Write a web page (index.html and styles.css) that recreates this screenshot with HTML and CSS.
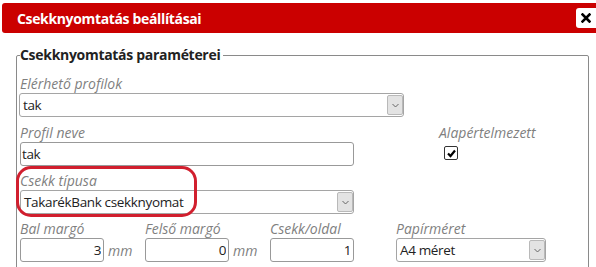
FILE: index.html
```html
<!DOCTYPE html>
<html>
<head>
    <meta http-equiv="Content-Type" content="text/html; charset=utf-8" />
    <title>Csekknyomtatás beállításai</title>
    <link rel="stylesheet" href="styles.css">
</head>
<body>
<div class="dialog">
    <div class="titlebar">
        <span class="title">Csekknyomtatás beállításai</span>
        <span class="close">
            <svg width="10" height="10" viewBox="0 0 10 10"><path d="M1.5 1.5 L8.5 8.5 M8.5 1.5 L1.5 8.5" stroke="#000" stroke-width="2.6" stroke-linecap="square"/></svg>
        </span>
    </div>
    <fieldset class="params">
        <legend>Csekknyomtatás paraméterei</legend>

        <div class="field">
            <label>Elérhető profilok</label>
            <div class="select wide">
                <span class="select-value">tak</span>
                <span class="select-arrow"><svg width="7" height="5" viewBox="0 0 7 5"><path d="M0.5 1 L3.5 4 L6.5 1" fill="none" stroke="#666" stroke-width="1"/></svg></span>
            </div>
        </div>

        <div class="row">
            <div class="field">
                <label>Profil neve</label>
                <input class="text name" type="text" value="tak">
            </div>
            <div class="field default-col">
                <label>Alapértelmezett</label>
                <span class="check">
                    <svg width="11" height="11" viewBox="0 0 11 11"><path d="M2 5.5 L4.5 8 L9 2.5" fill="none" stroke="#000" stroke-width="2.2"/></svg>
                </span>
            </div>
        </div>

        <div class="field">
            <label>Csekk típusa</label>
            <div class="select mid">
                <span class="select-value">TakarékBank csekknyomat</span>
                <span class="select-arrow"><svg width="7" height="5" viewBox="0 0 7 5"><path d="M0.5 1 L3.5 4 L6.5 1" fill="none" stroke="#666" stroke-width="1"/></svg></span>
            </div>
        </div>

        <div class="grid">
            <div class="field">
                <label>Bal margó</label>
                <div class="unit-wrap"><input class="text num" type="text" value="3"><span class="unit">mm</span></div>
            </div>
            <div class="field">
                <label>Felső margó</label>
                <div class="unit-wrap"><input class="text num" type="text" value="0"><span class="unit">mm</span></div>
            </div>
            <div class="field">
                <label>Csekk/oldal</label>
                <input class="text num" type="text" value="1">
            </div>
            <div class="field">
                <label>Papírméret</label>
                <div class="select paper">
                    <span class="select-value">A4 méret</span>
                    <span class="select-arrow"><svg width="7" height="5" viewBox="0 0 7 5"><path d="M0.5 1 L3.5 4 L6.5 1" fill="none" stroke="#666" stroke-width="1"/></svg></span>
                </div>
            </div>
        </div>

        <!-- kiemelés a csekk típusa körül -->
        <div class="highlight"></div>
    </fieldset>
</div>
</body>
</html>
```

FILE: styles.css
```css
* {
    margin: 0;
    padding: 0;
    box-sizing: border-box;
}
html, body {
    background: #fff;
    overflow: hidden;
}
body {
    width: 596px;
    height: 267px;
    font-family: "Open Sans", "Liberation Sans", sans-serif;
    color: #222;
}
/* fejléc */
.titlebar {
    display: flex;
    align-items: center;
    margin: 3px 0 0 2px;
    height: 30px;
    padding-left: 15px;
    background: #cb0000;
    border-radius: 3px 0 0 3px;
}
.title {
    color: #fff;
    font-weight: bold;
    font-size: 14px;
    letter-spacing: -0.35px;
}
.close {
    margin-left: auto;
    width: 20px;
    height: 20px;
    background: #fff;
    border-radius: 3px 0 0 3px;
    display: flex;
    align-items: center;
    justify-content: center;
}
/* keret */
.params {
    position: relative;
    margin: 12px 0 0 16px;
    width: 573px;
    height: 260px;
    border: 1px solid #8a8a8a;
    border-radius: 2px;
    padding: 10px 3px 0 3px;
}
.params legend {
    padding: 0 3px 0 0;
    font-weight: bold;
    font-size: 14px;
    line-height: 20px;
    letter-spacing: -0.3px;
    color: #222;
}
.field label {
    display: block;
    font-style: italic;
    font-size: 14px;
    line-height: 17px;
    height: 17px;
    margin-bottom: 1px;
    color: #7f7f7f;
    white-space: nowrap;
}
.field {
    margin-bottom: 6px;
}
.params > .field:first-of-type {
    margin-bottom: 7px;
}
/* legördülő */
.select {
    display: flex;
    height: 24px;
    border: 1px solid #a5a5a5;
    border-radius: 3px;
    background: #fff;
}
.select.wide { width: 385px; margin-left: -1px; }
.select.mid { width: 334px; }
.select.paper { width: 150px; }
.select-value {
    flex: 1;
    padding-left: 3px;
    font-size: 13.5px;
    letter-spacing: -0.35px;
    line-height: 22px;
    white-space: nowrap;
}
.select-arrow {
    width: 16px;
    margin: 1px 0 1px 0;
    background: #e3e3e3;
    border: 1px solid #b9b9b9;
    border-radius: 2px;
    display: flex;
    align-items: center;
    justify-content: center;
}
/* szövegmezők */
.text {
    display: block;
    height: 24px;
    border: 1px solid #999;
    border-radius: 3px;
    font-family: inherit;
    font-size: 13.5px;
    letter-spacing: -0.35px;
    color: #222;
    padding: 0 2px;
    outline: none;
}
.text.name { width: 334px; padding-left: 1px; }
.text.num { width: 84px; text-align: right; }
.row {
    display: flex;
}
.default-col {
    margin-left: 85px;
}
.check {
    display: flex;
    align-items: center;
    justify-content: center;
    width: 14px;
    height: 14px;
    margin: 5px 0 0 5px;
    border: 1px solid #333;
    border-radius: 2px;
    background: #fff;
}
.grid {
    display: grid;
    grid-template-columns: 125px 125px 126px 150px;
}
.unit-wrap {
    display: flex;
    align-items: center;
}
.unit {
    margin-left: 4px;
    font-style: italic;
    font-size: 14px;
    color: #7f7f7f;
}
/* piros kiemelés */
.highlight {
    position: absolute;
    left: -1px;
    top: 101px;
    width: 181px;
    height: 51px;
    border: 3px solid #d11f2e;
    border-radius: 15px;
    pointer-events: none;
}
```
